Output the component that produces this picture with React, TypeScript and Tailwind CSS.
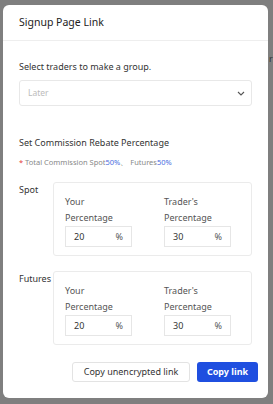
import React from "react";

function PctInput({ value }: { value: string }) {
  return (
    <div className="flex h-[21px] w-[67px] items-center justify-between border border-[#e6e6e6] bg-white pl-[8px] pr-[8px] text-[9px] text-[#333]">
      <span>{value}</span>
      <span className="text-[#555]">%</span>
    </div>
  );
}

function Card({ label }: { label: string }) {
  return (
    <div className="flex">
      <div className="w-[34px] text-[9px] leading-[16px] text-[#333]">{label}</div>
      <div className="flex h-[74px] w-[199px] gap-[32px] rounded-[3px] border border-[#ebebeb] pl-[11px] pt-[11px]">
        <div className="flex flex-col">
          <div className="text-[9px] leading-[16px] text-[#555]">Your</div>
          <div className="text-[9px] leading-[16px] text-[#555]">Percentage</div>
          <PctInput value="20" />
        </div>
        <div className="flex flex-col">
          <div className="text-[9px] leading-[16px] text-[#555]">Trader's</div>
          <div className="text-[9px] leading-[16px] text-[#555]">Percentage</div>
          <PctInput value="30" />
        </div>
      </div>
    </div>
  );
}

export default function App() {
  return (
    <div
      className="relative h-[404px] w-[273px] overflow-hidden bg-[#7f7f7f] pl-[3px] pt-[5px]"
      style={{ fontFamily: '"Noto Sans", "Open Sans", sans-serif' }}
    >
      <span className="absolute left-[269px] top-[52px] text-[9px] text-[#333]">r</span>
      <div className="relative h-[393px] w-[265px] rounded-[6px] bg-white">
        <div className="flex h-[36px] items-center border-b border-[#eeeeee] px-4 text-[10.5px] text-[#222]">
          Signup Page Link
        </div>
        <div className="px-4">
          <div className="mt-[18px] text-[9px] leading-[16px] text-[#333]">Select traders to make a group.</div>
          <div className="mt-[5px] flex h-[26px] w-[233px] items-center justify-between rounded-[3px] border border-[#e8e8e8] pl-[8px] pr-[6px]">
            <span className="text-[8.5px] text-[#bbbbbb]">Later</span>
            <svg width="8" height="5" viewBox="0 0 8 5" fill="none">
              <path d="M1 1l3 3 3-3" stroke="#555" strokeWidth="1.1" />
            </svg>
          </div>
          <div className="mt-[29px] text-[9px] leading-[16px] text-[#333]">Set Commission Rebate Percentage</div>
          <div className="mt-[5px] text-[7.5px] leading-[12px] text-[#888]">
            <span className="text-[#e53935]">*</span> Total Commission Spot<span className="text-[#4a6ee0]">50%</span>、 Futures<span className="text-[#4a6ee0]">50%</span>
          </div>
          <div className="mt-[14px]">
            <Card label="Spot" />
          </div>
          <div className="mt-[15px]">
            <Card label="Futures" />
          </div>
        </div>
        <div className="mt-[17px] flex justify-end gap-[7px] pr-[10px]">
          <button className="flex h-[20px] w-[118px] items-center justify-center rounded-[3px] border border-[#e3e3e3] bg-white text-[9px] text-[#333]">
            Copy unencrypted link
          </button>
          <button className="flex h-[20px] w-[61px] items-center justify-center rounded-[3px] bg-[#1f4fe0] text-[9px] font-bold text-white">
            Copy link
          </button>
        </div>
      </div>
    </div>
  );
}
